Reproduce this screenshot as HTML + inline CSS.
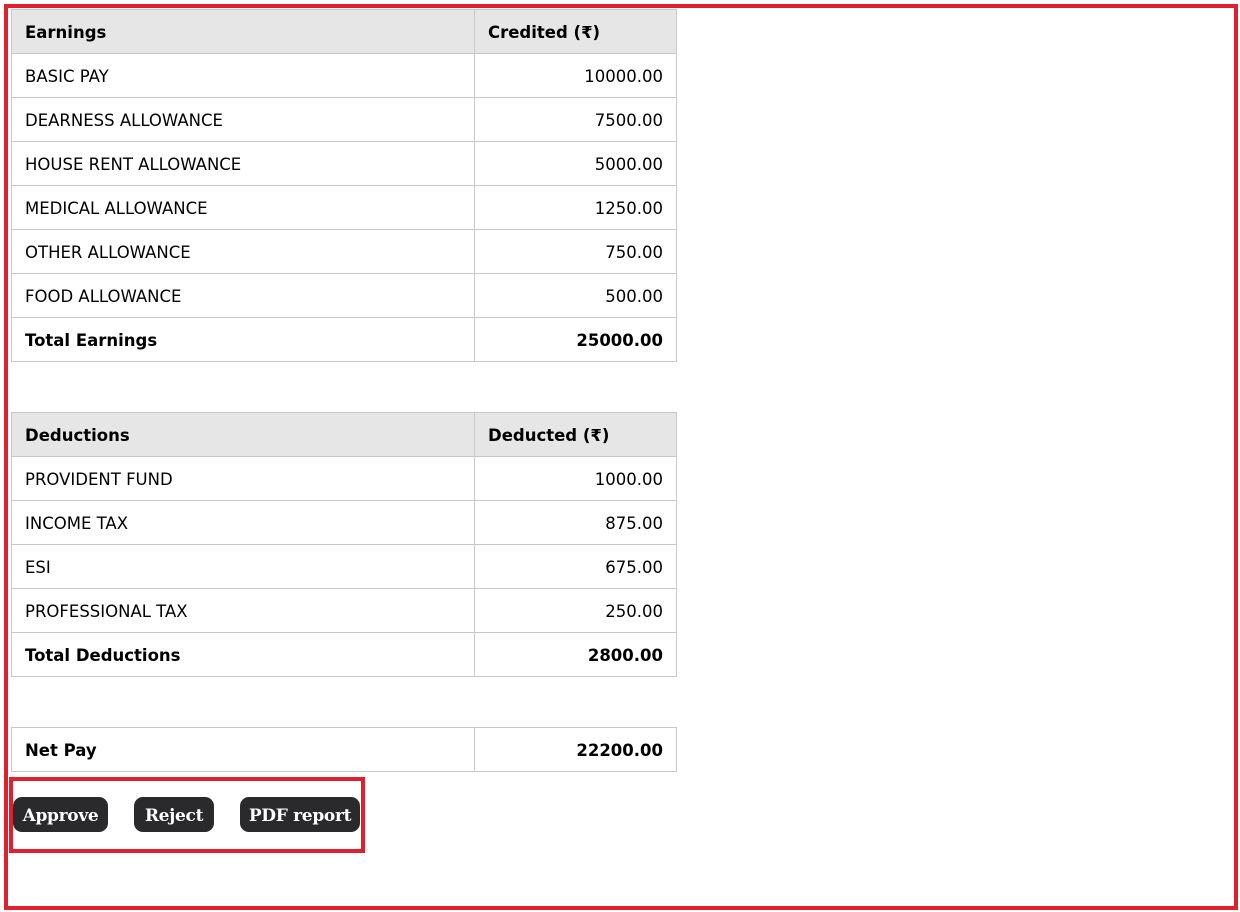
<!DOCTYPE html>
<html><head><meta charset="utf-8"><style>
body{margin:0;width:1240px;height:912px;background:#fff;position:relative;font-family:"DejaVu Sans","Liberation Sans",sans-serif;color:#000}
.outer{position:absolute;left:4px;top:4px;width:1226px;height:898px;border:4px solid #e0202e}
table{position:absolute;left:11px;width:666px;border-collapse:collapse;font-size:16.5px}
td,th{border:1px solid #c8c8c8;height:41px;padding:2px 13px 0;text-align:left;line-height:20px}
th{background:#e6e6e6;font-weight:bold;font-size:16.5px}
td.r{text-align:right}
td.b{font-weight:bold;font-size:16.5px}
td:first-child,th:first-child{width:436px}
.box{position:absolute;left:9px;top:777px;width:348px;height:68px;border:4px solid #e0202e}
.btn{position:absolute;top:797px;height:35px;background:#2a2a2c;color:#fff;border-radius:9px;font-weight:bold;font-size:17px;line-height:38px;text-align:center;font-family:"DejaVu Serif","Liberation Serif",serif;letter-spacing:-0.3px}
</style></head><body>
<div class="outer"></div>
<table style="top:9px">
<tr><th>Earnings</th><th>Credited (₹)</th></tr>
<tr><td>BASIC PAY</td><td class="r">10000.00</td></tr>
<tr><td>DEARNESS ALLOWANCE</td><td class="r">7500.00</td></tr>
<tr><td>HOUSE RENT ALLOWANCE</td><td class="r">5000.00</td></tr>
<tr><td>MEDICAL ALLOWANCE</td><td class="r">1250.00</td></tr>
<tr><td>OTHER ALLOWANCE</td><td class="r">750.00</td></tr>
<tr><td>FOOD ALLOWANCE</td><td class="r">500.00</td></tr>
<tr><td class="b">Total Earnings</td><td class="r b">25000.00</td></tr>
</table>
<table style="top:412px">
<tr><th>Deductions</th><th>Deducted (₹)</th></tr>
<tr><td>PROVIDENT FUND</td><td class="r">1000.00</td></tr>
<tr><td>INCOME TAX</td><td class="r">875.00</td></tr>
<tr><td>ESI</td><td class="r">675.00</td></tr>
<tr><td>PROFESSIONAL TAX</td><td class="r">250.00</td></tr>
<tr><td class="b">Total Deductions</td><td class="r b">2800.00</td></tr>
</table>
<table style="top:727px">
<tr><td class="b">Net Pay</td><td class="r b">22200.00</td></tr>
</table>
<div class="box"></div>
<div class="btn" style="left:13px;width:95px">Approve</div>
<div class="btn" style="left:134px;width:80px">Reject</div>
<div class="btn" style="left:240px;width:120px">PDF report</div>
</body></html>
